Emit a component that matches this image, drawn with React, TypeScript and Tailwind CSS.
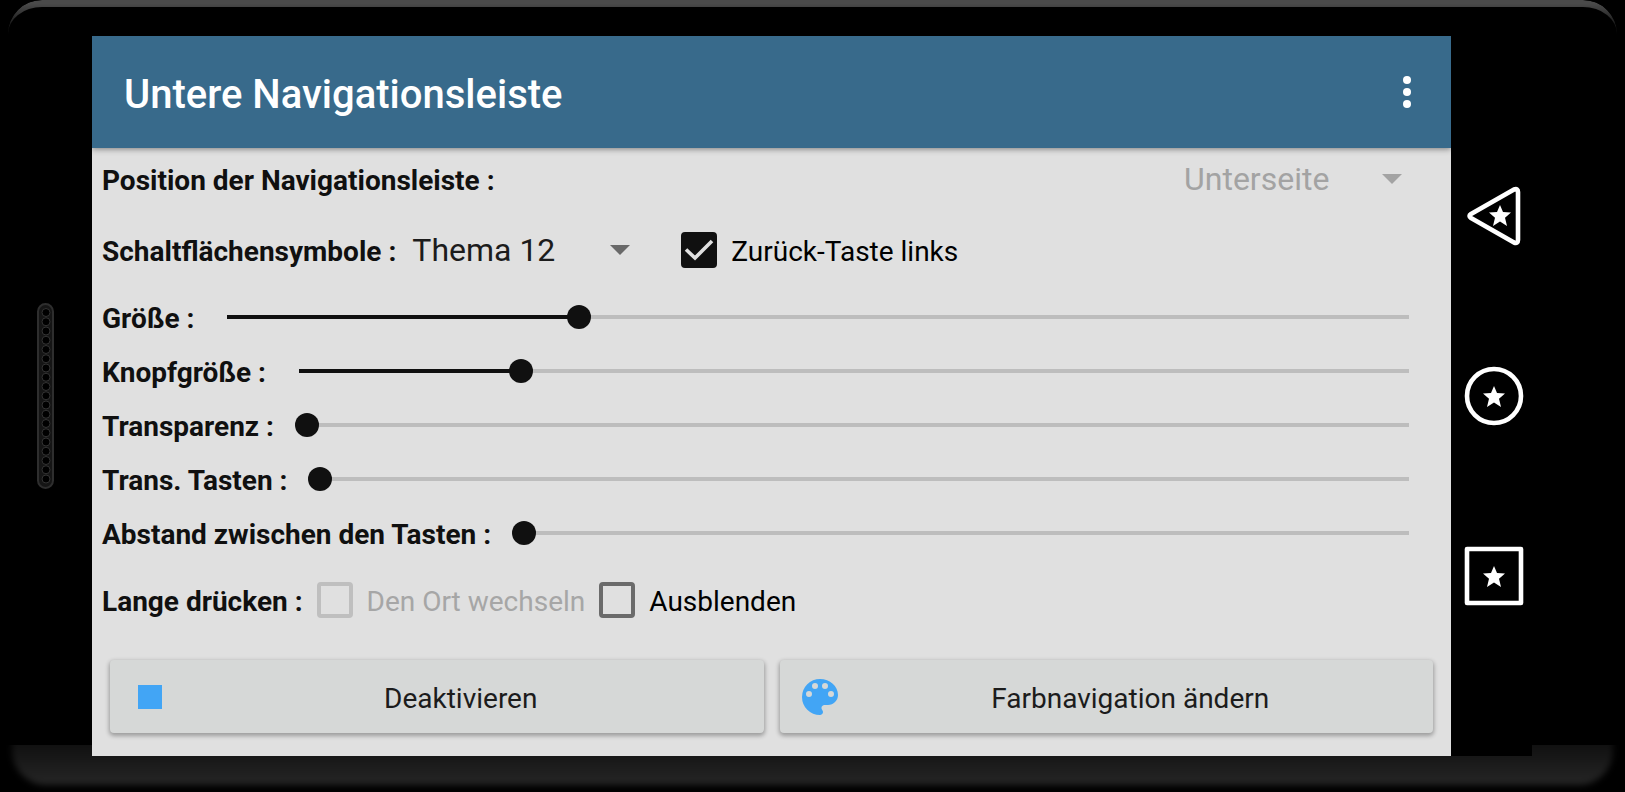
import { useState } from 'react';
import type { CSSProperties, ReactNode } from 'react';

interface SliderRowProps {
    id: string;
    label: string;
    max: number;
    initial: number;
}

interface CheckBoxProps {
    id: string;
    label: string;
    initial?: boolean;
    disabled?: boolean;
}

interface SpinnerProps {
    id: string;
    options: string[];
    disabled?: boolean;
}

const STAR = 'M0 -11 L3 -4 L11 -3.4 L5 1.8 L7 10 L0 5.6 L-7 10 L-5 1.8 L-11 -3.4 L-3 -4 Z';

function SliderRow({ id, label, max, initial }: SliderRowProps) {
    const [value, setValue] = useState(initial);
    const fill = { '--fill': `${(value / max) * 100}%` } as CSSProperties;

    return (
        <div className="flex h-[54px] items-center gap-[21px] pr-5">
            <label htmlFor={id} className="pt-1 font-bold whitespace-nowrap">{label}</label>
            <input
                id={id}
                type="range"
                min={0}
                max={max}
                value={value}
                onChange={(e) => setValue(Number(e.target.value))}
                style={fill}
                className="h-6 min-w-0 flex-1 appearance-none bg-[linear-gradient(to_right,#101010_var(--fill),#bdbdbd_var(--fill))] bg-[length:calc(100%-24px)_4px] bg-center bg-no-repeat [&::-webkit-slider-thumb]:size-6 [&::-webkit-slider-thumb]:appearance-none [&::-webkit-slider-thumb]:rounded-full [&::-webkit-slider-thumb]:bg-[#101010]"
            />
        </div>
    );
}

function CheckBox({ id, label, initial = false, disabled = false }: CheckBoxProps) {
    const [checked, setChecked] = useState(initial);

    return (
        <div className="flex items-center gap-3.5">
            <span className="relative flex size-9">
                <input
                    id={id}
                    type="checkbox"
                    checked={checked}
                    disabled={disabled}
                    onChange={() => setChecked(!checked)}
                    className="size-9 appearance-none rounded border-4 border-[#6b6b6b] checked:border-[#101010] checked:bg-[#101010] disabled:border-[#bfbfbf]"
                />
                {checked && (
                    <svg viewBox="0 0 36 36" className="pointer-events-none absolute inset-0" aria-hidden="true">
                        <path d="M5 17.5 L14 26 L31 9" fill="none" stroke="#e0e0e0" strokeWidth="3.6" />
                    </svg>
                )}
            </span>
            <label htmlFor={id} className={disabled ? 'pt-1 text-[#a6a6a6]' : 'pt-1 text-black'}>{label}</label>
        </div>
    );
}

function Spinner({ id, options, disabled = false }: SpinnerProps) {
    return (
        <div className={disabled ? 'relative text-[#a3a3a3]' : 'relative text-[#1c1c1c]'}>
            <select
                id={id}
                disabled={disabled}
                className="w-[237px] appearance-none text-[32px] leading-10 opacity-100"
            >
                {options.map((option) => (
                    <option key={option}>{option}</option>
                ))}
            </select>
            <svg
                viewBox="0 0 20 10"
                className={disabled ? 'pointer-events-none absolute top-[15px] right-[19px] w-5 fill-[#a3a3a3]' : 'pointer-events-none absolute top-[15px] right-[19px] w-5 fill-[#696969]'}
                aria-hidden="true"
            >
                <path d="M0 0 H20 L10 10 Z" />
            </svg>
        </div>
    );
}

function NavButton({ label, children }: { label: string; children: ReactNode }) {
    return (
        <button type="button" aria-label={label} className="flex h-[180px] items-center">
            <svg viewBox="0 0 60 60" className="size-[60px] fill-none stroke-white stroke-[4.6]">
                {children}
            </svg>
        </button>
    );
}

function ActionButton({ icon, children }: { icon: ReactNode; children: ReactNode }) {
    return (
        <button
            type="button"
            className="flex h-[73px] flex-1 items-center rounded-sm bg-[#d6d8d7] px-4 text-[#1c1c1c] shadow-[0_2px_4px_1px_rgba(0,0,0,0.3)]"
        >
            <svg viewBox="0 0 24 24" className="size-12 fill-[#42a5f5]" aria-hidden="true">
                {icon}
            </svg>
            <span className="flex-1 pt-1 text-center">{children}</span>
        </button>
    );
}

export default function App() {
    return (
        <div className="relative flex min-h-screen flex-col bg-black font-[Roboto,'Noto_Sans',sans-serif] text-[28px] leading-9 text-[#101010]">
            {/* phone edges */}
            <div className="absolute inset-x-2 top-0 h-9 rounded-t-[34px] border-t-[7px] border-[#4a4a4a] mask-b-from-10% mask-b-to-100%" />
            <div className="absolute inset-x-0 bottom-0 h-[47px] overflow-hidden">
                <div className="mx-3 -mt-5 h-[60px] rounded-b-[34px] bg-linear-to-b from-[#080808] to-[#262626] blur-[3px]" />
            </div>

            <div className="relative flex flex-1 pt-9 pb-9">
                {/* speaker */}
                <div className="flex w-[92px] shrink-0 items-center justify-center">
                    <svg viewBox="0 0 18 186" className="h-[186px] w-[18px]" aria-hidden="true">
                        <rect x="1" y="1" width="15" height="184" rx="7.5" fill="#151515" stroke="#2e2e2e" strokeWidth="2" />
                        {Array.from({ length: 19 }, (_, i) => (
                            <circle key={i} cx="9" cy={9.5 + i * 9.25} r="4" fill="#000" stroke="#333" />
                        ))}
                    </svg>
                </div>

                <main className="flex min-w-0 flex-1 flex-col bg-[#e0e0e0]">
                    <header className="flex h-28 items-center justify-between bg-[#386a8b] pr-5 pl-8 text-white shadow-[0_1px_6px_rgba(0,0,0,0.45)]">
                        <h1 className="pt-1.5 text-[40px] leading-12 font-medium">Untere Navigationsleiste</h1>
                        <button type="button" aria-label="Weitere Optionen">
                            <svg viewBox="0 0 24 24" className="size-12 fill-white">
                                <circle cx="12" cy="6" r="2" />
                                <circle cx="12" cy="12" r="2" />
                                <circle cx="12" cy="18" r="2" />
                            </svg>
                        </button>
                    </header>

                    <form className="flex flex-1 flex-col px-2.5">
                        <div className="flex h-[62px] items-center justify-between pr-5">
                            <label htmlFor="position" className="pt-1 font-bold">Position der Navigationsleiste :</label>
                            <Spinner id="position" options={['Unterseite']} disabled />
                        </div>

                        <div className="flex h-20 items-center">
                            <label htmlFor="symbols" className="pt-1 pr-4 font-bold">Schaltflächensymbole :</label>
                            <Spinner id="symbols" options={['Thema 12']} />
                            <div className="pl-8">
                                <CheckBox id="back-left" label="Zurück-Taste links" initial />
                            </div>
                        </div>

                        <SliderRow id="size" label="Größe :" max={47} initial={14} />
                        <SliderRow id="button-size" label="Knopfgröße :" max={10} initial={2} />
                        <SliderRow id="transparency" label="Transparenz :" max={100} initial={0} />
                        <SliderRow id="button-transparency" label="Trans. Tasten :" max={100} initial={0} />
                        <SliderRow id="button-gap" label="Abstand zwischen den Tasten :" max={100} initial={0} />

                        <div className="flex h-20 items-center gap-3.5">
                            <span className="pt-1 font-bold">Lange drücken :</span>
                            <CheckBox id="change-place" label="Den Ort wechseln" disabled />
                            <CheckBox id="hide" label="Ausblenden" />
                        </div>

                        <div className="flex gap-4 px-2 pt-5 pb-5">
                            <ActionButton icon={<path d="M6 6h12v12H6z" />}>Deaktivieren</ActionButton>
                            <ActionButton
                                icon={
                                    <path d="M12 3a9 9 0 0 0 0 18c.83 0 1.5-.67 1.5-1.5 0-.39-.15-.74-.39-1.01-.23-.26-.38-.61-.38-.99 0-.83.67-1.5 1.5-1.5H16c2.76 0 5-2.24 5-5 0-4.42-4.03-8-9-8zm-5.5 9a1.5 1.5 0 1 1 0-3 1.5 1.5 0 0 1 0 3zm3-4a1.5 1.5 0 1 1 0-3 1.5 1.5 0 0 1 0 3zm5 0a1.5 1.5 0 1 1 0-3 1.5 1.5 0 0 1 0 3zm3 4a1.5 1.5 0 1 1 0-3 1.5 1.5 0 0 1 0 3z" />
                                }
                            >
                                Farbnavigation ändern
                            </ActionButton>
                        </div>
                    </form>
                </main>

                {/* navigation bar of the phone */}
                <nav className="mr-[93px] flex w-[81px] shrink-0 flex-col items-start justify-center bg-black pl-[13px]">
                    <NavButton label="Zurück">
                        <path d="M7 28 L50 3.5 Q54 2 54 6 V54 Q54 58 50 56.5 L7 32 Q4 30 7 28 Z" strokeLinejoin="round" />
                        <path d={STAR} transform="translate(36 30)" className="fill-white stroke-none" />
                    </NavButton>
                    <NavButton label="Startseite">
                        <circle cx="30" cy="30" r="27" />
                        <path d={STAR} transform="translate(30 31)" className="fill-white stroke-none" />
                    </NavButton>
                    <NavButton label="Übersicht">
                        <rect x="3" y="3" width="54" height="54" strokeLinejoin="round" />
                        <path d={STAR} transform="translate(30 31)" className="fill-white stroke-none" />
                    </NavButton>
                </nav>
            </div>
        </div>
    );
}
